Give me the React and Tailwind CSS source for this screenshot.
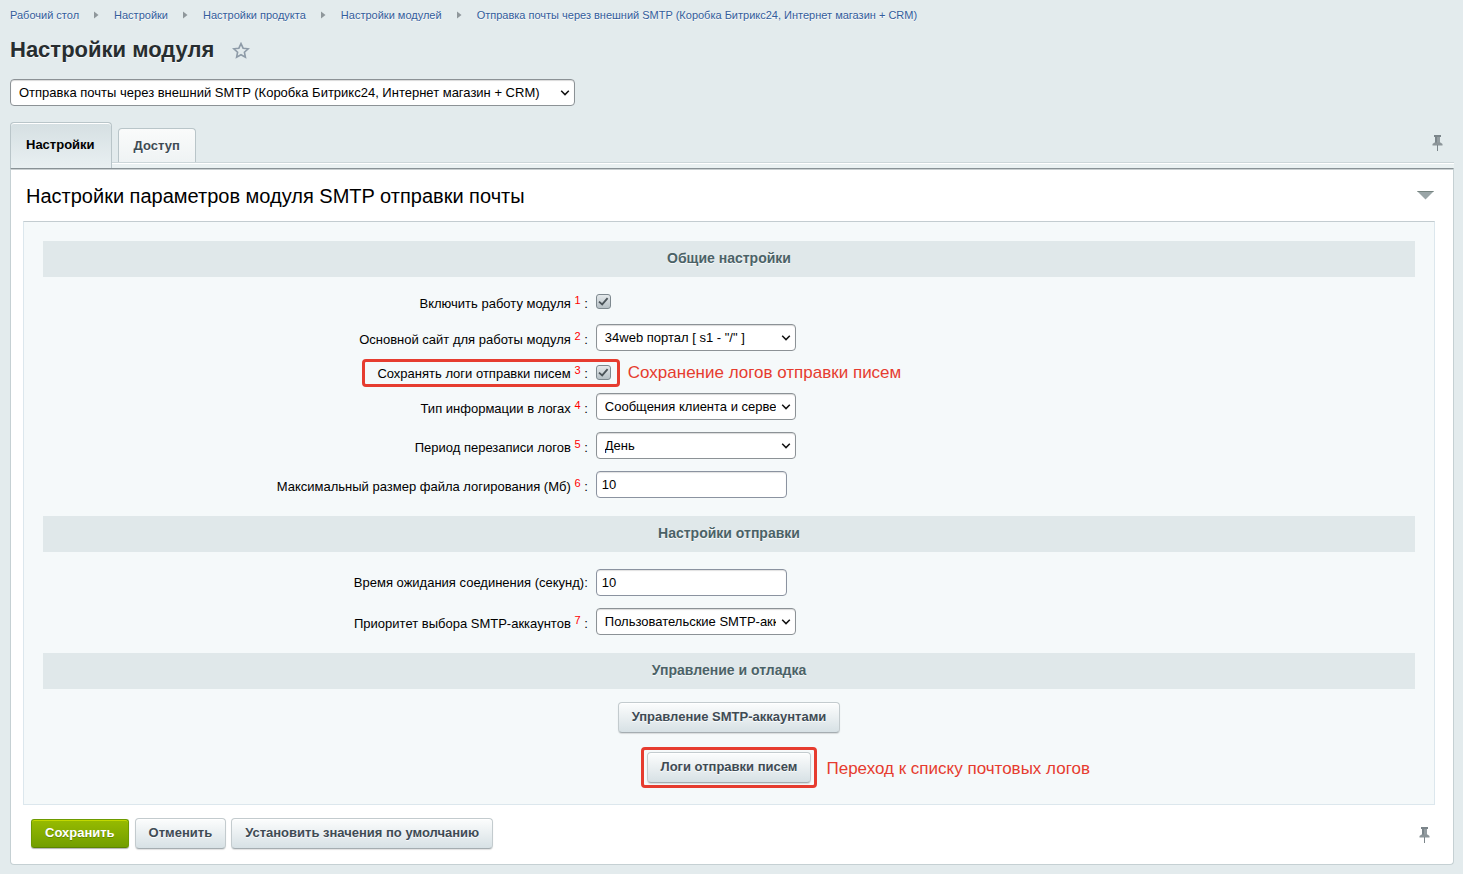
import React from "react";

const TEXT_SHADOW = "[text-shadow:0_1px_0_rgba(255,255,255,0.8)]";

const crumbs = [
  "Рабочий стол",
  "Настройки",
  "Настройки продукта",
  "Настройки модулей",
  "Отправка почты через внешний SMTP (Коробка Битрикс24, Интернет магазин + CRM)",
];

function Breadcrumbs() {
  return (
    <nav aria-label="Навигация" className="flex h-5 items-center text-[11px] leading-5">
      {crumbs.map((text, i) => (
        <React.Fragment key={text}>
          {i > 0 && (
            <svg className="mx-[15px] shrink-0" width="5" height="8" viewBox="0 0 5 8" aria-hidden="true">
              <path d="M0 0.5L4.5 4L0 7.5Z" fill="#8f979b" />
            </svg>
          )}
          <a href="#" className={`whitespace-nowrap text-[#335d9c] ${TEXT_SHADOW}`}>
            {text}
          </a>
        </React.Fragment>
      ))}
    </nav>
  );
}

function Pin() {
  return (
    <svg width="11" height="17" viewBox="0 0 11 17" aria-hidden="true">
      <rect x="2" y="0" width="7" height="2" fill="#7b858a" />
      <rect x="3" y="2" width="5" height="6" fill="#949da1" />
      <rect x="3" y="2" width="2" height="6" fill="#7b858a" />
      <path d="M2.5 7.5H8.5L10.5 9V10.5H0.5V9Z" fill="#8c9599" />
      <rect x="5" y="10" width="1" height="6" fill="#7b858a" />
    </svg>
  );
}

function Select({ id, value, label, className = "w-[200px]" }) {
  return (
    <span className={`relative inline-flex ${className}`}>
      <select
        id={id}
        aria-label={label}
        defaultValue={value}
        className="h-[27px] w-full appearance-none overflow-hidden rounded-sm border border-[#8c9296] bg-white pl-2 pr-[19px] text-[13px] text-black shadow-[inset_0_1px_1px_rgba(0,0,0,0.15)]"
      >
        <option>{value}</option>
      </select>
      <svg className="pointer-events-none absolute right-[5px] top-[11px]" width="10" height="6" viewBox="0 0 10 6" aria-hidden="true">
        <path d="M1.2 0.8L5 4.6L8.8 0.8" fill="none" stroke="#111" strokeWidth="1.5" />
      </svg>
    </span>
  );
}

function TextField({ id, value }) {
  return (
    <input
      id={id}
      type="text"
      defaultValue={value}
      className="h-[27px] w-[191px] rounded-sm border border-[#8b93a0] bg-white px-[5px] text-[13px] text-black shadow-[inset_0_1px_1px_rgba(0,0,0,0.12)]"
    />
  );
}

function Checkbox({ id }) {
  return (
    <span className="relative inline-flex">
      <input
        id={id}
        type="checkbox"
        defaultChecked
        className="size-[15px] appearance-none rounded-[3px] border border-[#7e898f] bg-linear-to-b from-[#e4e9eb] to-[#b6c0c5]"
      />
      <svg className="pointer-events-none absolute left-[2px] top-[3px]" width="11" height="9" viewBox="0 0 11 9" aria-hidden="true">
        <path d="M1 4.6L4.2 7.4L9.6 1.2" fill="none" stroke="#4b5459" strokeWidth="1.8" />
      </svg>
    </span>
  );
}

function Row({ id, label, note, height = "h-[39px]", children }) {
  return (
    <div className={`flex items-center ${height}`}>
      <label htmlFor={id} className={`w-2/5 shrink-0 pr-1 text-right text-[13px] leading-4 text-black ${note ? "pt-1" : ""}`}>
        {label}
        {note && (
          <>
            {" "}
            <sup className="-top-1 align-baseline text-[11px] text-[#f00]">{note}</sup>{" "}
          </>
        )}
        :
      </label>
      <div className="flex flex-1 items-center pl-1">{children}</div>
    </div>
  );
}

function SectionTitle({ children }) {
  return (
    <h2 className={`flex h-9 items-center justify-center bg-[#e0e8ea] pb-[2px] text-sm font-bold text-[#4b6267] ${TEXT_SHADOW}`}>
      {children}
    </h2>
  );
}

function Button({ children }) {
  return (
    <button
      type="button"
      className={`h-[31px] whitespace-nowrap rounded-sm border border-[#c3cbce] border-b-[#a5adb1] bg-linear-to-b from-[#fcfdfd] to-[#d7e1e5] px-[13px] pb-px text-[13px] font-bold text-[#3f4b54] shadow-[inset_0_1px_0_#fff,0_1px_1px_rgba(0,0,0,0.12)] ${TEXT_SHADOW}`}
    >
      {children}
    </button>
  );
}

export default function App() {
  return (
    <div className="min-h-screen bg-[#e3ebed] pb-[9px] pl-[10px] pr-[9px] pt-[5px] font-['Liberation_Sans',Arial,sans-serif]">
      <Breadcrumbs />

      <div className="mt-[9px] flex h-8 items-center gap-[18px]">
        <h1 className={`text-[22px] font-bold leading-8 text-[#272d30] ${TEXT_SHADOW}`}>Настройки модуля</h1>
        <button type="button" aria-label="Добавить в избранное">
          <svg width="18" height="17" viewBox="0 0 18 17" aria-hidden="true">
            <path
              d="M9 1.6L11.1 6.2L16.2 6.8L12.4 10.2L13.4 15.2L9 12.7L4.6 15.2L5.6 10.2L1.8 6.8L6.9 6.2Z"
              fill="none"
              stroke="#8e9ba8"
              strokeWidth="1.6"
            />
          </svg>
        </button>
      </div>

      <div className="mt-[13px] flex">
        <Select
          id="module"
          label="Модуль"
          className="w-[565px]"
          value="Отправка почты через внешний SMTP (Коробка Битрикс24, Интернет магазин + CRM)"
        />
      </div>

      <div className="mt-4 flex items-end">
        <div role="tablist" className="flex items-end">
          <button
            type="button"
            role="tab"
            aria-selected="true"
            className="h-[46px] rounded-t-sm border border-b-0 border-[#b9c5c9] bg-linear-to-b from-[#d5dfe2] to-[#e9f0f2] pl-[15px] pr-4 pb-px text-[13px] font-bold text-black shadow-[inset_0_1px_0_#fff]"
          >
            Настройки
          </button>
          <div className="h-[6px] w-[6px] border-t border-[#ccd6d9] bg-[#eaf1f2] shadow-[inset_0_1px_0_#fff]" />
          <div className="flex flex-col">
            <button
              type="button"
              role="tab"
              aria-selected="false"
              className={`h-[34px] rounded-t-sm border border-b-0 border-[#b9c5c9] bg-linear-to-b from-[#fafbfb] to-[#eff3f4] px-[15px] text-[13px] font-bold text-[#3f4b54] ${TEXT_SHADOW}`}
            >
              Доступ
            </button>
            <div className="h-[6px] border-t border-[#ccd6d9] bg-[#eaf1f2] shadow-[inset_0_1px_0_#fff]" />
          </div>
        </div>
        <div className="flex flex-1 flex-col">
          <button type="button" aria-label="Закрепить вкладки" className="mb-[10px] mr-[11px] self-end">
            <Pin />
          </button>
          <div className="h-[6px] border-t border-[#ccd6d9] bg-[#eaf1f2] shadow-[inset_0_1px_0_#fff]" />
        </div>
      </div>

      <main className="rounded-b-sm border border-[#c5d0d3] border-t-[#899296] bg-white pb-[15px] pl-3 pr-[18px] shadow-[inset_0_1px_0_#c9cfd1]">
        <div className="flex h-[52px] items-center justify-between pl-[3px] pr-px">
          <h2 className="pt-[2px] text-xl text-black">Настройки параметров модуля SMTP отправки почты</h2>
          <button type="button" aria-label="Свернуть">
            <svg width="17" height="9" viewBox="0 0 17 9" aria-hidden="true">
              <path d="M0 0H17L8.5 8.5Z" fill="#9aa5a7" />
              <path d="M0 0H17L16 1H1Z" fill="#75837f" />
            </svg>
          </button>
        </div>

        <form className="border border-[#dce7ed] border-t-[#c3ccd0] bg-[#f5f9fa] px-[19px] pb-[21px] pt-[19px]">
          <SectionTitle>Общие настройки</SectionTitle>
          <div className="pb-3 pt-2">
            <Row id="active" label="Включить работу модуля" note="1" height="h-[33px]">
              <Checkbox id="active" />
            </Row>
            <Row id="site" label="Основной сайт для работы модуля" note="2">
              <Select id="site" value={'34web портал [ s1 - "/" ]'} />
            </Row>
            <Row id="logs" label="Сохранять логи отправки писем" note="3" height="h-[30px]">
              <span className="relative inline-flex items-center">
                <Checkbox id="logs" />
                <span className="pointer-events-none absolute -right-[9px] -top-[6px] h-[28px] w-[258px] rounded-sm border-3 border-[#e63c2f]" />
                <span className="absolute left-8 whitespace-nowrap pt-px text-[17px] leading-5 text-[#e63c2f]">
                  Сохранение логов отправки писем
                </span>
              </span>
            </Row>
            <Row id="logtype" label="Тип информации в логах" note="4">
              <Select id="logtype" value="Сообщения клиента и сервера" />
            </Row>
            <Row id="period" label="Период перезаписи логов" note="5">
              <Select id="period" value="День" />
            </Row>
            <Row id="size" label="Максимальный размер файла логирования (Мб)" note="6">
              <TextField id="size" value="10" />
            </Row>
          </div>

          <SectionTitle>Настройки отправки</SectionTitle>
          <div className="pb-3 pt-[11px]">
            <Row id="timeout" label="Время ожидания соединения (секунд)">
              <TextField id="timeout" value="10" />
            </Row>
            <Row id="priority" label="Приоритет выбора SMTP-аккаунтов" note="7">
              <Select id="priority" value="Пользовательские SMTP-аккаунты" />
            </Row>
          </div>

          <SectionTitle>Управление и отладка</SectionTitle>
          <div className="flex flex-col items-center gap-[19px] pt-[13px]">
            <Button>Управление SMTP-аккаунтами</Button>
            <span className="relative inline-flex">
              <Button>Логи отправки писем</Button>
              <span className="pointer-events-none absolute -inset-x-[6px] -inset-y-[5px] rounded-sm border-3 border-[#e63c2f]" />
              <span className="absolute left-full top-[7px] ml-[15px] whitespace-nowrap text-[17px] leading-5 text-[#e63c2f]">
                Переход к списку почтовых логов
              </span>
            </span>
          </div>
        </form>

        <div className="mt-[13px] flex items-center pl-2">
          <button
            type="submit"
            className="mr-[6px] h-[29px] rounded-[3px] border border-[#6d9a00] border-b-[#5c8500] bg-linear-to-b from-[#97bb00] to-[#729e00] px-[13px] pb-px text-[13px] font-bold text-white shadow-[inset_0_1px_0_#c3d800,0_1px_1px_rgba(0,0,0,0.3)] [text-shadow:0_1px_0_rgba(80,110,0,0.6)]"
          >
            Сохранить
          </button>
          <div className="flex gap-[5px]">
            <Button>Отменить</Button>
            <Button>Установить значения по умолчанию</Button>
          </div>
          <button type="button" aria-label="Закрепить панель" className="ml-auto mr-[5px] pt-[3px]">
            <Pin />
          </button>
        </div>
      </main>
    </div>
  );
}
